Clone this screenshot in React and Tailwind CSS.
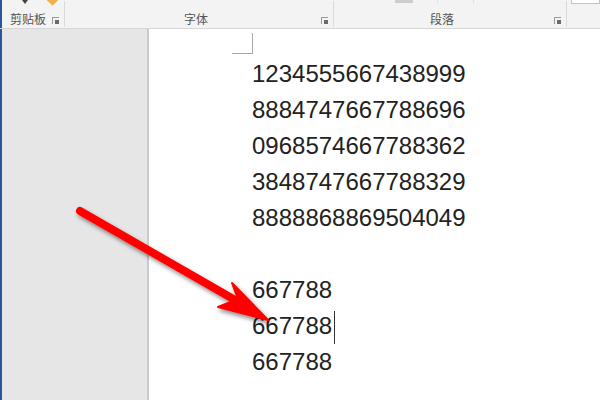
import React from 'react';

const lines = [
  '1234555667438999',
  '8884747667788696',
  '0968574667788362',
  '3848747667788329',
  '8888868869504049',
];

const Launcher = () => (
  <span className="relative mb-[1px] block h-[7px] w-[7px] border-l border-t border-[#9a9a9a]">
    <span className="absolute bottom-0 right-0 h-[4px] w-[4px] bg-[#6a6a6a]" />
  </span>
);

const RedArrow = () => (
  <svg className="pointer-events-none absolute left-0 top-0" width="600" height="400" viewBox="0 0 600 400">
    <defs>
      <filter id="shadow" x="-20%" y="-20%" width="140%" height="140%">
        <feDropShadow dx="2" dy="3" stdDeviation="2" floodColor="#000" floodOpacity="0.45" />
      </filter>
    </defs>
    <g filter="url(#shadow)">
      <line x1="80" y1="211" x2="242" y2="304" stroke="#ff0000" strokeWidth="8" strokeLinecap="round" />
      <path d="M268 320 L232 283 L238 299 L218 307 Z" fill="#ff0000" stroke="#ff0000" strokeWidth="2" strokeLinejoin="round" />
    </g>
  </svg>
);

const App = () => {
  return (
    <div className="relative h-[400px] w-[600px] overflow-hidden bg-white" style={{ fontFamily: '"Liberation Sans", Arial, sans-serif' }}>
      {/* Ribbon */}
      <div className="flex h-[29px] border-b border-[#d6d6d6] bg-[#f3f3f3] text-[12px] text-[#555]" style={{ fontFamily: '"Noto Sans CJK SC", "Liberation Sans", sans-serif' }}>
        <div className="w-[2px] bg-[#2b579a]" />
        <div className="relative flex w-[62px] items-end justify-between pb-[3px] pl-[8px] pr-[5px]">
          <span className="absolute left-[20px] top-0 h-0 w-0 border-x-[3px] border-t-[4px] border-x-transparent border-t-[#444]" />
          <span className="absolute left-[46px] top-[-5px] h-[9px] w-[9px] rotate-45 bg-[#f2b04a]" />
          <span className="leading-none">剪贴板</span>
          <Launcher />
        </div>
        <div className="my-[1px] w-px bg-[#dadada]" />
        <div className="relative flex w-[268px] items-end pb-[3px] pr-[5px]">
          <span className="flex-1 pl-[6px] text-center leading-none">字体</span>
          <Launcher />
        </div>
        <div className="my-[1px] w-px bg-[#dadada]" />
        <div className="relative flex w-[232px] items-end pb-[3px] pr-[5px]">
          <span className="absolute left-[61px] top-0 h-[3px] w-[18px] bg-[#cdcdcd]" />
          <span className="absolute left-[103px] top-0 h-[3px] w-px bg-[#dedede]" />
          <span className="absolute left-[139px] top-0 h-[3px] w-px bg-[#dedede]" />
          <span className="flex-1 pr-[4px] text-center leading-none">段落</span>
          <Launcher />
        </div>
        <div className="my-[1px] w-px bg-[#dadada]" />
        <div className="flex-1 pl-[4px]">
          <div className="h-[4px] border-x border-b border-[#c4c4c4] bg-white" />
        </div>
      </div>

      {/* Body */}
      <div className="flex h-[371px]">
        <div className="w-[2px] bg-[#2b579a]" />
        <div className="w-[147px] border-r-2 border-[#cbcbcb] bg-[#e6e6e6]" />
        <div className="flex-1 bg-white pt-[4px]">
          <div className="ml-[83px] h-[21px] w-[21px] border-b border-r border-[#a8a8a8]" />
          <div className="mt-[2px] pl-[103px] text-[24px] leading-[36px] text-[#222]">
            {lines.map((l) => (
              <div key={l}>{l}</div>
            ))}
            <div className="h-[36px]" />
            <div>667788</div>
            <div>
              667788
              <span className="relative top-[3px] ml-[2px] inline-block h-[33px] w-px bg-[#333] align-top" />
            </div>
            <div>667788</div>
          </div>
        </div>
      </div>

      <RedArrow />
    </div>
  );
};

export default App;
